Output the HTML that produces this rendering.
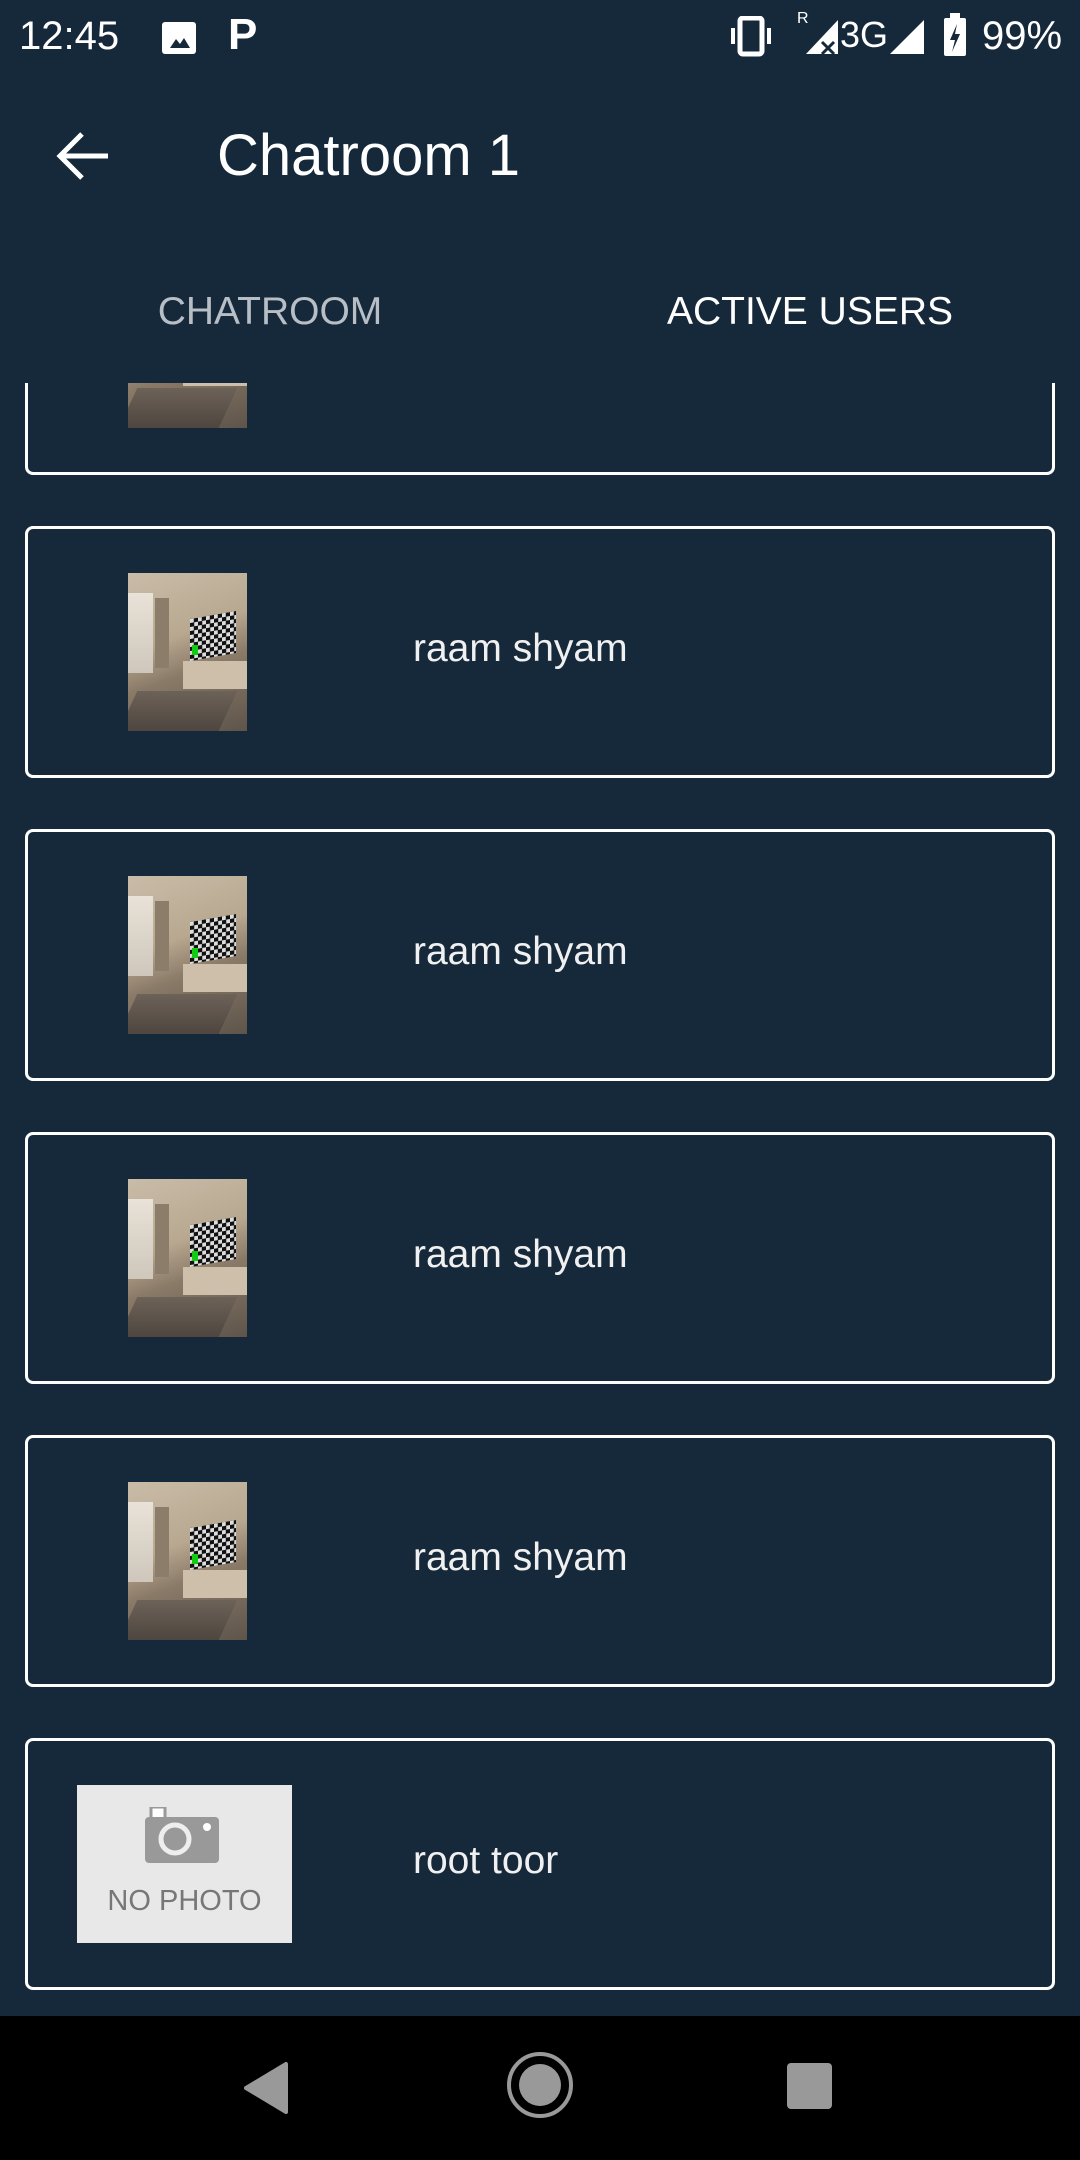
<!DOCTYPE html>
<html><head><meta charset="utf-8"><style>
*{margin:0;padding:0;box-sizing:border-box}
body{width:1080px;height:2160px;background:#16293b;font-family:"Liberation Sans",Roboto,sans-serif;position:relative;overflow:hidden;color:#fff}
.abs{position:absolute}
.card{position:absolute;left:25px;width:1030px;height:252px;border:3px solid #fff;border-radius:8px;background:#16293b}
.photo{position:absolute;left:100px;top:44px;width:119px;height:158px;overflow:hidden;
background:linear-gradient(160deg,#c9bca8 0%,#b8a890 40%,#8a7a68 60%,#5e544b 100%)}
.photo .win{position:absolute;left:0;top:20px;width:25px;height:80px;background:linear-gradient(#e8e2d8,#cfc7bb)}
.photo .shelf{position:absolute;left:27px;top:25px;width:14px;height:70px;background:#8b7d6a}
.photo .tv{position:absolute;left:62px;top:42px;width:46px;height:42px;
background:repeating-conic-gradient(#111 0 25%,#ddd 0 50%) 0 0/8px 8px;transform:skewY(-10deg)}
.photo .green{position:absolute;left:64px;top:72px;width:6px;height:10px;background:#1c1}
.photo .stand{position:absolute;left:55px;top:88px;width:64px;height:28px;background:#cdbfa9}
.photo .rug{position:absolute;left:0;top:118px;width:100px;height:40px;background:linear-gradient(#6d6258,#4e463f);transform:skewX(-25deg)}
.name{position:absolute;left:385px;top:-3px;height:246px;line-height:246px;font-size:39px;color:#f0f0f0}
</style></head><body>
<div class="abs" style="left:19px;top:14px;font-size:40px;line-height:44px">12:45</div>
<div class="abs" style="left:162px;top:22px;width:34px;height:32px;border-radius:3px;background:#fff"></div>
<svg class="abs" style="left:162px;top:22px" width="34" height="32"><path d="M8 26 L14 17 L18 22 L22 16 L28 26Z" fill="#16293b"/></svg>
<div class="abs" style="left:228px;top:10px;font-size:44px;font-weight:bold;line-height:50px">P</div>
<svg class="abs" style="left:728px;top:16px" width="50" height="42"><rect x="12" y="2" width="22" height="36" rx="3" fill="none" stroke="#fff" stroke-width="5"/><rect x="3" y="12" width="4" height="16" fill="#fff"/><rect x="39" y="12" width="4" height="16" fill="#fff"/></svg>
<div class="abs" style="left:797px;top:10px;font-size:16px">R</div>
<svg class="abs" style="left:802px;top:16px" width="40" height="40"><path d="M4 38 L36 4 L36 38Z" fill="#fff"/><path d="M20 26 L32 38 M32 26 L20 38" stroke="#16293b" stroke-width="3"/></svg>
<div class="abs" style="left:840px;top:14px;font-size:36px">3G</div>
<svg class="abs" style="left:888px;top:16px" width="38" height="40"><path d="M2 38 L36 4 L36 38Z" fill="#fff"/></svg>
<svg class="abs" style="left:942px;top:12px" width="26" height="46"><rect x="2" y="6" width="22" height="38" rx="2" fill="#fff"/><rect x="8" y="1" width="10" height="6" fill="#fff"/><path d="M15 12 L8 28 L13 28 L10 40 L18 22 L13 22Z" fill="#16293b"/></svg>
<div class="abs" style="left:982px;top:14px;font-size:40px;line-height:44px">99%</div>
<svg class="abs" style="left:56px;top:130px" width="56" height="52"><path d="M52 26 H6 M26 4 L4 26 L26 48" fill="none" stroke="#fff" stroke-width="5"/></svg>
<div class="abs" style="left:217px;top:122px;font-size:58px;line-height:68px;font-weight:500">Chatroom 1</div>
<div class="abs" style="left:0;top:240px;width:1080px;height:143px;background:#16293b"></div>
<div class="abs" style="left:0;top:240px;width:540px;height:143px;line-height:143px;text-align:center;font-size:39px;color:#b8bec6;font-weight:500">CHATROOM</div>
<div class="abs" style="left:540px;top:240px;width:540px;height:143px;line-height:143px;text-align:center;font-size:39px;color:#fff;font-weight:500">ACTIVE USERS</div>
<div class="abs" style="left:0;top:383px;width:1080px;height:1633px;overflow:hidden">
<div class="card" style="top:-160px"><div class="photo"><div class="win"></div><div class="shelf"></div><div class="tv"></div><div class="green"></div><div class="stand"></div><div class="rug"></div></div></div>
<div class="card" style="top:143px"><div class="photo"><div class="win"></div><div class="shelf"></div><div class="tv"></div><div class="green"></div><div class="stand"></div><div class="rug"></div></div><div class="name">raam shyam</div></div>
<div class="card" style="top:446px"><div class="photo"><div class="win"></div><div class="shelf"></div><div class="tv"></div><div class="green"></div><div class="stand"></div><div class="rug"></div></div><div class="name">raam shyam</div></div>
<div class="card" style="top:749px"><div class="photo"><div class="win"></div><div class="shelf"></div><div class="tv"></div><div class="green"></div><div class="stand"></div><div class="rug"></div></div><div class="name">raam shyam</div></div>
<div class="card" style="top:1052px"><div class="photo"><div class="win"></div><div class="shelf"></div><div class="tv"></div><div class="green"></div><div class="stand"></div><div class="rug"></div></div><div class="name">raam shyam</div></div>
<div class="card" style="top:1355px">
 <div class="abs" style="left:49px;top:44px;width:215px;height:158px;background:#e8e8e8">
  <svg class="abs" style="left:66px;top:22px" width="78" height="58"><rect x="8" y="0" width="14" height="12" fill="#fff" stroke="#999" stroke-width="3"/><rect x="2" y="10" width="74" height="46" rx="4" fill="#999"/><circle cx="32" cy="32" r="14" fill="none" stroke="#eee" stroke-width="5"/><circle cx="64" cy="20" r="4" fill="#fff"/></svg>
  <div class="abs" style="left:0;top:100px;width:215px;text-align:center;font-size:29px;color:#777">NO PHOTO</div>
 </div>
 <div class="name">root toor</div>
</div>
</div>
<div class="abs" style="left:0;top:2016px;width:1080px;height:144px;background:#000"></div>
<svg class="abs" style="left:240px;top:2060px" width="50" height="56"><path d="M46 4 L46 52 L6 28Z" fill="#999" stroke="#999" stroke-width="4" stroke-linejoin="round"/></svg>
<svg class="abs" style="left:505px;top:2050px" width="70" height="70"><circle cx="35" cy="35" r="31" fill="none" stroke="#999" stroke-width="4"/><circle cx="35" cy="35" r="21" fill="#999"/></svg>
<div class="abs" style="left:787px;top:2063px;width:45px;height:46px;border-radius:4px;background:#999"></div>
</body></html>
